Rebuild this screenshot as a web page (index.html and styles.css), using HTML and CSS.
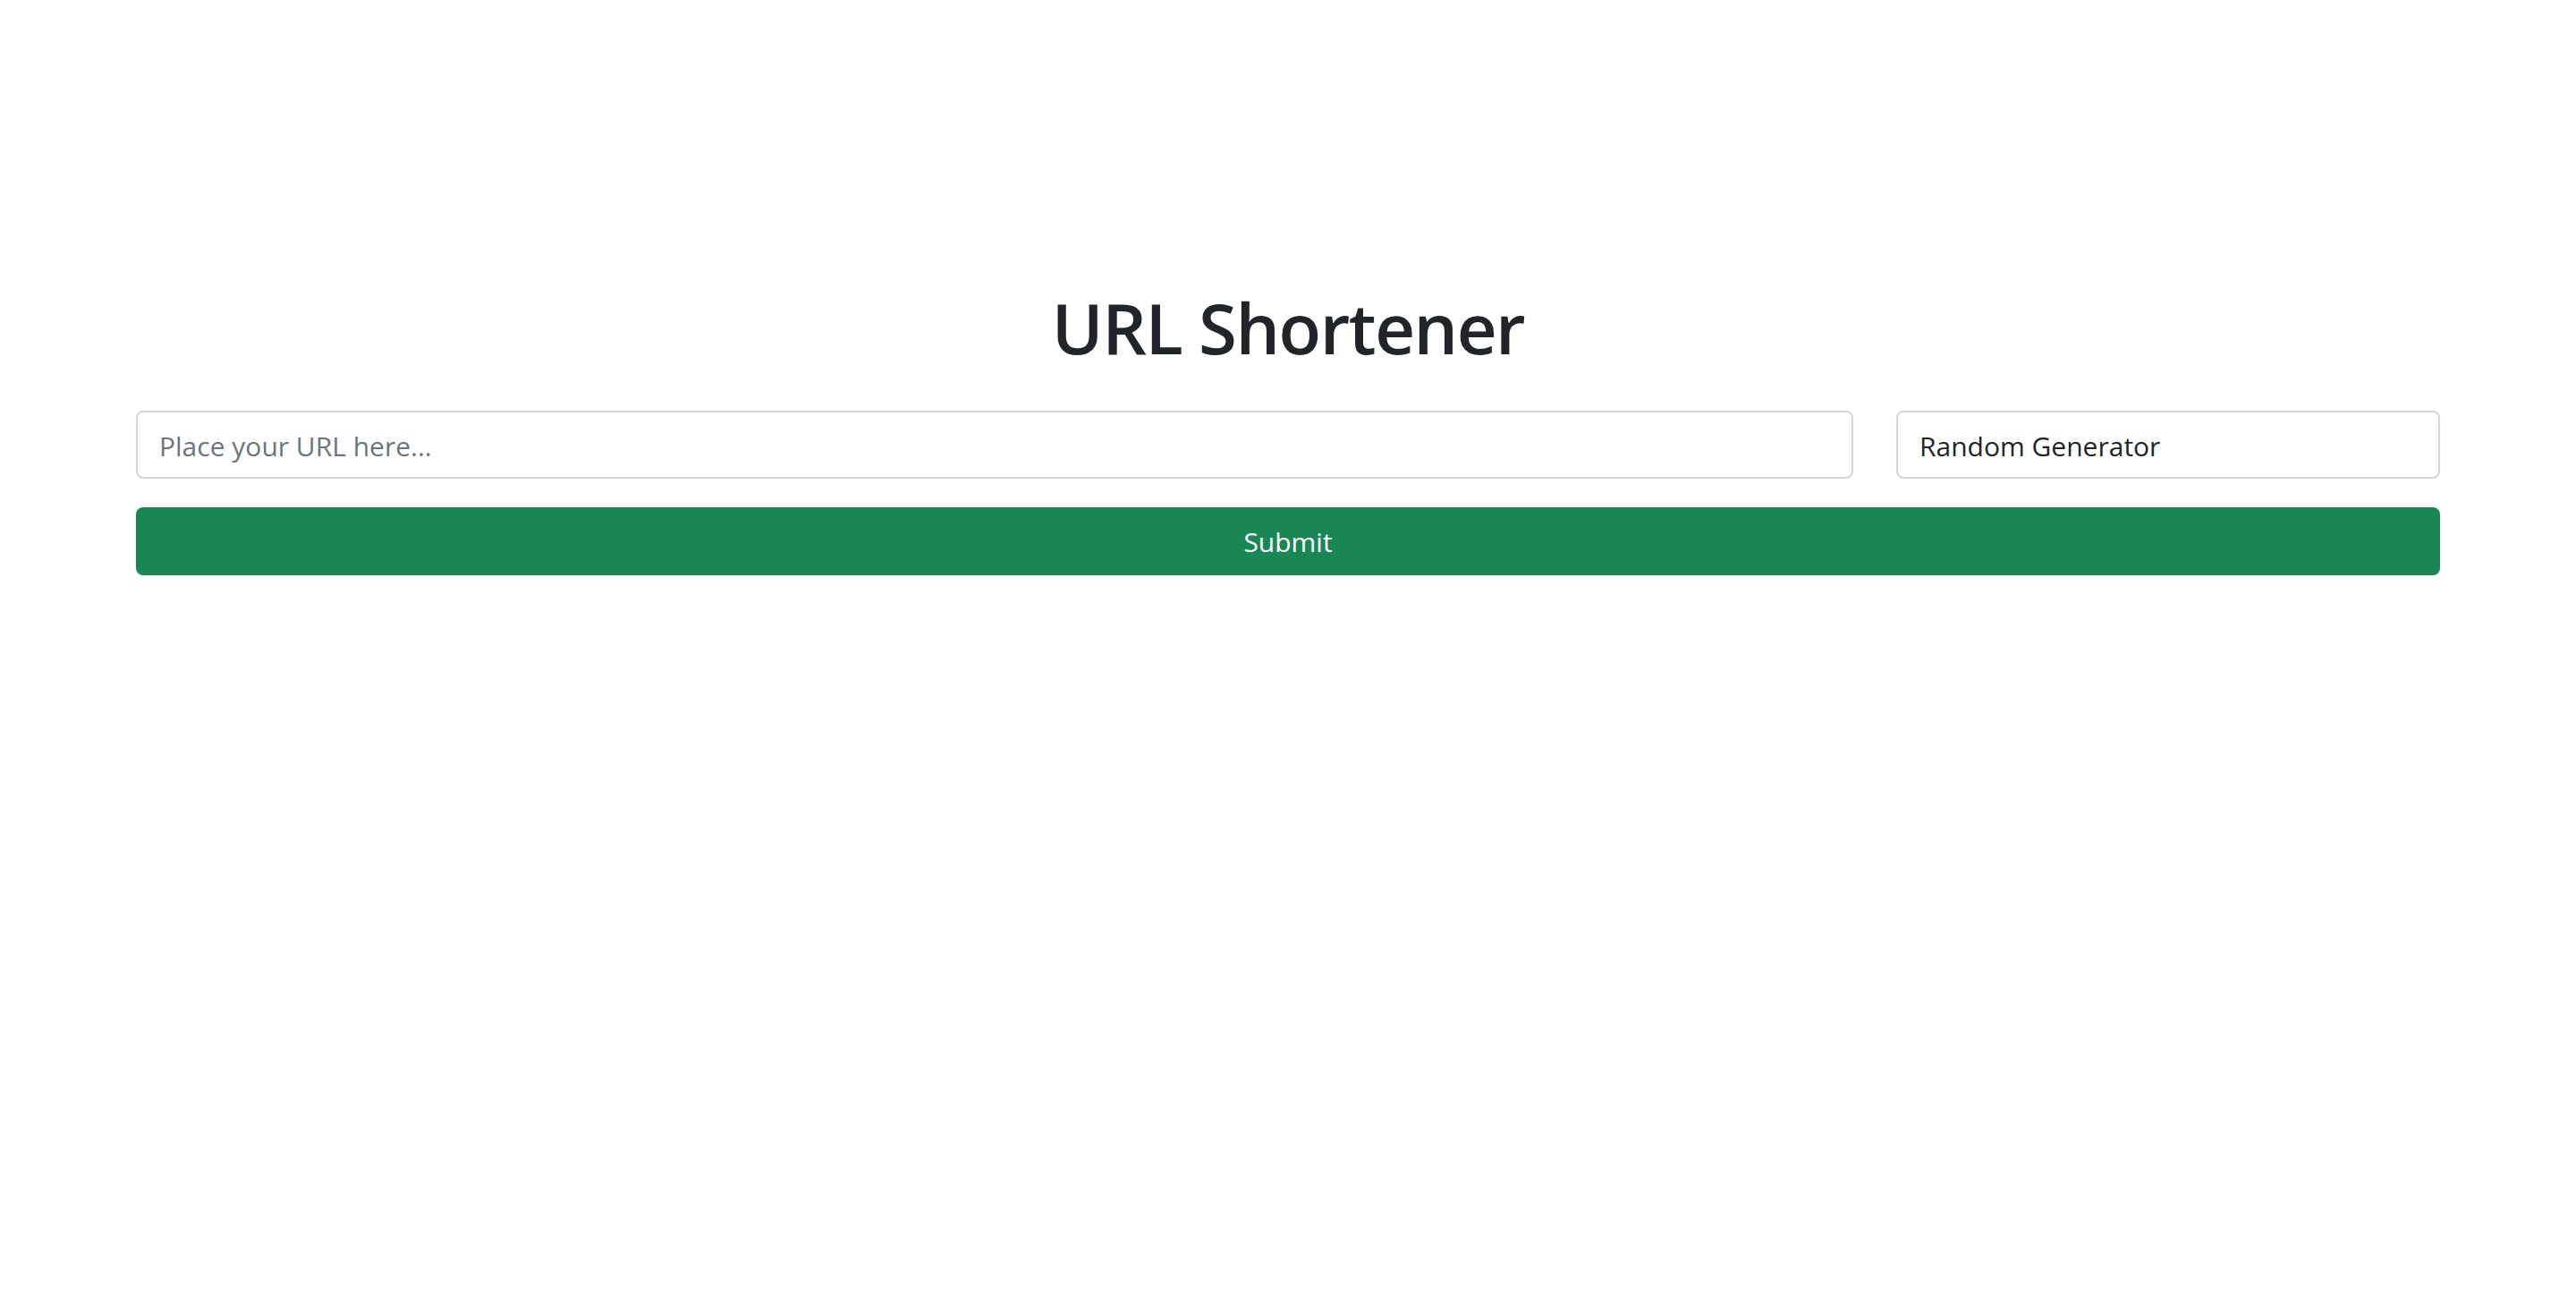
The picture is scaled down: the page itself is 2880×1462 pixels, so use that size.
FILE: index.html
```html
<!DOCTYPE html>
<html lang="en">
<head>
<meta charset="utf-8">
<title>URL Shortener</title>
<link rel="stylesheet" href="styles.css">
</head>
<body>
<main class="container">
  <h1 class="title">URL Shortener</h1>
  <form class="form">
    <div class="row">
      <input class="field field-url" type="text" placeholder="Place your URL here...">
      <input class="field field-gen" type="text" value="Random Generator">
    </div>
    <button class="submit" type="button">Submit</button>
  </form>
</main>
</body>
</html>
```
FILE: styles.css
```css
html, body {
  margin: 0;
  padding: 0;
  background: #ffffff;
}
body {
  font-family: "Open Sans", "Noto Sans", sans-serif;
  color: #212529;
}
.container {
  width: 2576px;
  margin: 0 auto;
  padding-top: 318px;
}
.title {
  margin: 0 0 45px;
  font-size: 78px;
  font-weight: 600;
  letter-spacing: -1.5px;
  line-height: 96px;
  text-align: center;
  color: #212529;
}
.form {
  margin: 0;
}
.row {
  display: flex;
  gap: 48px;
}
.field {
  box-sizing: border-box;
  height: 76px;
  padding: 2px 24px 0;
  border: 2px solid #d3d7dc;
  border-radius: 8px;
  font-family: inherit;
  font-size: 30px;
  color: #212529;
  background: #fff;
  outline: none;
}
.field::placeholder {
  color: #6c757d;
  opacity: 1;
}
.field-url {
  flex: 1;
  min-width: 0;
}
.field-gen {
  width: 608px;
  flex: none;
}
.submit {
  display: block;
  width: 100%;
  height: 76px;
  margin-top: 32px;
  padding-top: 2px;
  border: none;
  border-radius: 8px;
  background: #198754;
  color: #ffffff;
  font-family: inherit;
  font-size: 30px;
  cursor: pointer;
}
```
